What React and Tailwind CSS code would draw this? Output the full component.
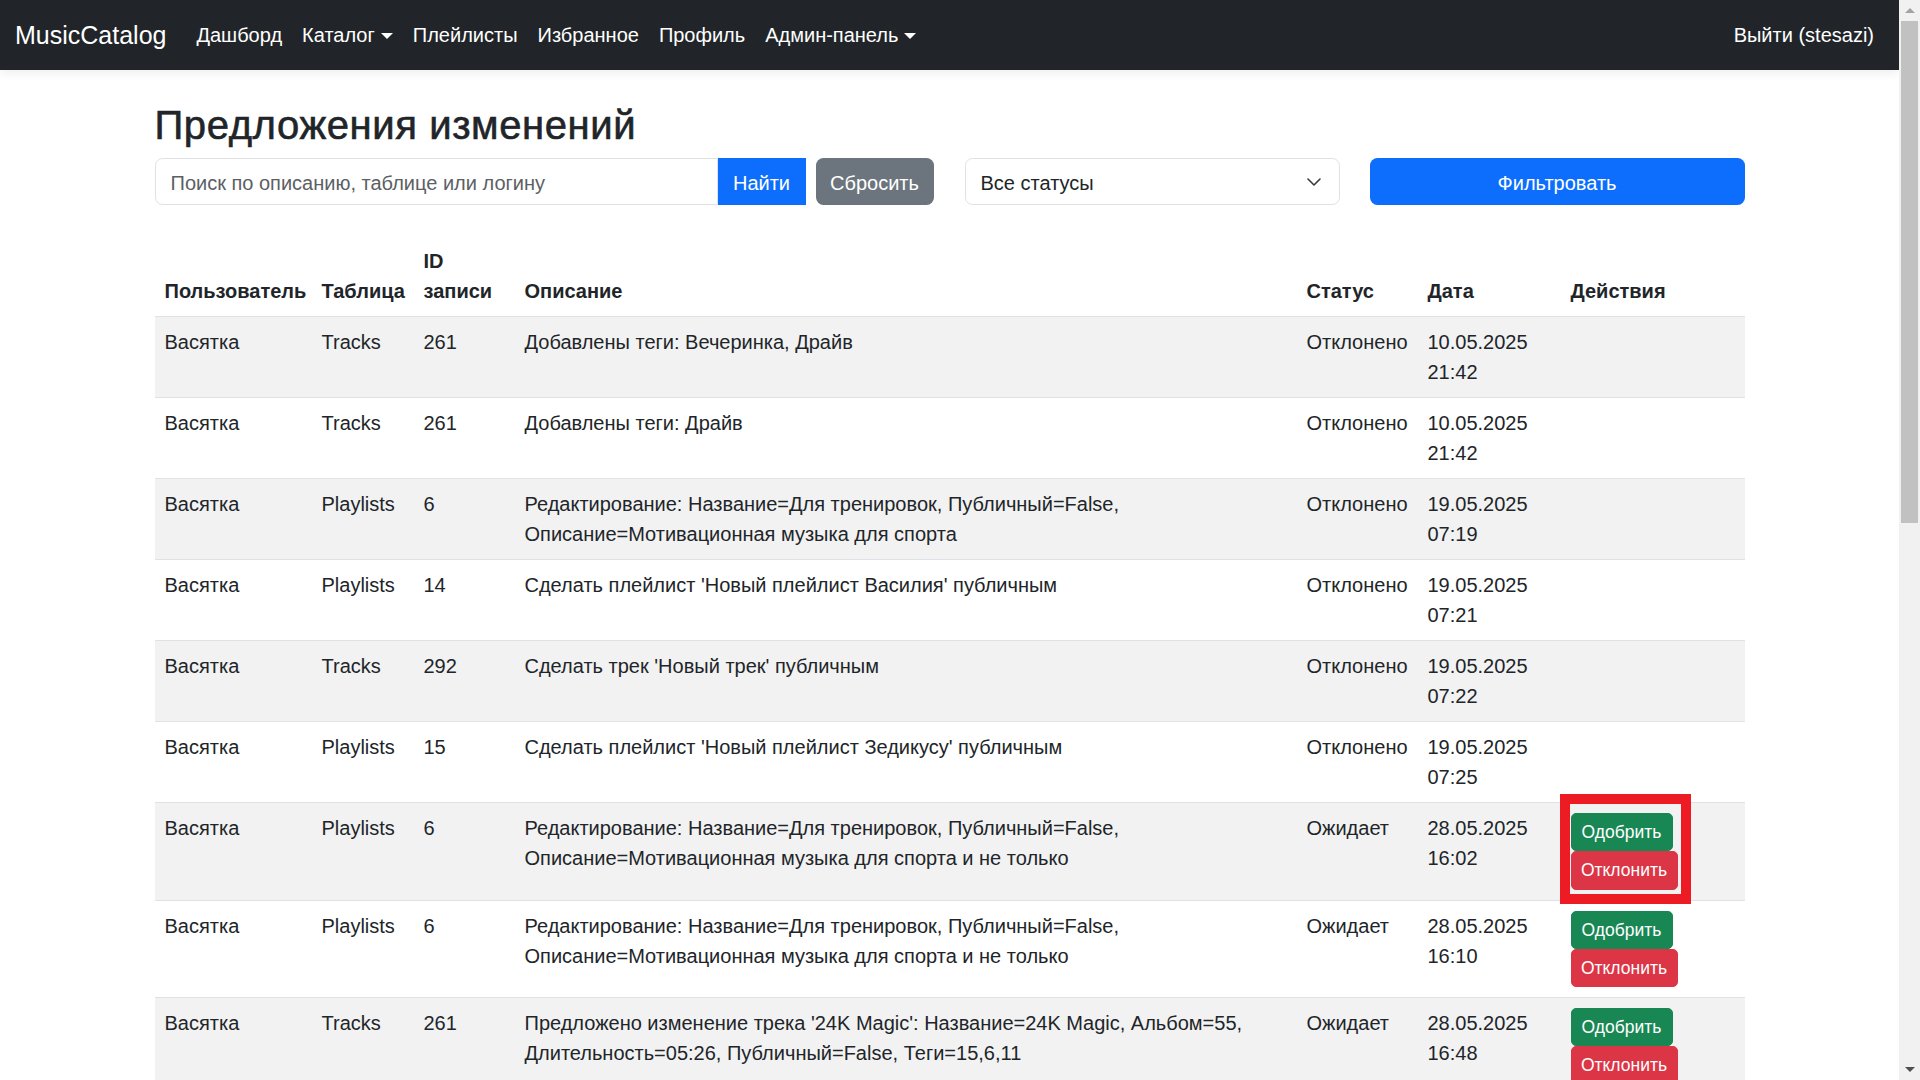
import React from "react";

const rows = [
  {
    user: "Васятка",
    table: "Tracks",
    id: "261",
    desc: ["Добавлены теги: Вечеринка, Драйв"],
    status: "Отклонено",
    date: "10.05.2025",
    time: "21:42",
  },
  {
    user: "Васятка",
    table: "Tracks",
    id: "261",
    desc: ["Добавлены теги: Драйв"],
    status: "Отклонено",
    date: "10.05.2025",
    time: "21:42",
  },
  {
    user: "Васятка",
    table: "Playlists",
    id: "6",
    desc: [
      "Редактирование: Название=Для тренировок, Публичный=False,",
      "Описание=Мотивационная музыка для спорта",
    ],
    status: "Отклонено",
    date: "19.05.2025",
    time: "07:19",
  },
  {
    user: "Васятка",
    table: "Playlists",
    id: "14",
    desc: ["Сделать плейлист 'Новый плейлист Василия' публичным"],
    status: "Отклонено",
    date: "19.05.2025",
    time: "07:21",
  },
  {
    user: "Васятка",
    table: "Tracks",
    id: "292",
    desc: ["Сделать трек 'Новый трек' публичным"],
    status: "Отклонено",
    date: "19.05.2025",
    time: "07:22",
  },
  {
    user: "Васятка",
    table: "Playlists",
    id: "15",
    desc: ["Сделать плейлист 'Новый плейлист Зедикусу' публичным"],
    status: "Отклонено",
    date: "19.05.2025",
    time: "07:25",
  },
  {
    user: "Васятка",
    table: "Playlists",
    id: "6",
    desc: [
      "Редактирование: Название=Для тренировок, Публичный=False,",
      "Описание=Мотивационная музыка для спорта и не только",
    ],
    status: "Ожидает",
    date: "28.05.2025",
    time: "16:02",
    pending: true,
    marked: true,
  },
  {
    user: "Васятка",
    table: "Playlists",
    id: "6",
    desc: [
      "Редактирование: Название=Для тренировок, Публичный=False,",
      "Описание=Мотивационная музыка для спорта и не только",
    ],
    status: "Ожидает",
    date: "28.05.2025",
    time: "16:10",
    pending: true,
  },
  {
    user: "Васятка",
    table: "Tracks",
    id: "261",
    desc: [
      "Предложено изменение трека '24K Magic': Название=24K Magic, Альбом=55,",
      "Длительность=05:26, Публичный=False, Теги=15,6,11",
    ],
    status: "Ожидает",
    date: "28.05.2025",
    time: "16:48",
    pending: true,
  },
];

function Caret() {
  return (
    <span className="ml-[6px] mt-[1px] inline-block h-0 w-0 border-x-[6px] border-t-[6px] border-x-transparent border-t-white" />
  );
}

function NavLink({ children, dropdown }) {
  return (
    <a className="flex items-center px-[10px] text-white">
      {children}
      {dropdown && <Caret />}
    </a>
  );
}

function Actions({ marked }) {
  return (
    <div className="relative flex flex-col items-start">
      <button className="w-[102px] rounded-[5px] border border-[#198754] bg-[#198754] py-[5px] text-center text-[17.5px] leading-[26.25px] text-white">
        Одобрить
      </button>
      <button className="w-[107px] rounded-[5px] border border-[#dc3545] bg-[#dc3545] py-[5px] text-center text-[17.5px] leading-[26.25px] text-white">
        Отклонить
      </button>
      {marked && (
        <div className="absolute left-[-11px] top-[-19px] h-[110px] w-[131px] border-[10px] border-[#ed1c24]" />
      )}
    </div>
  );
}

export default function App() {
  return (
    <div className="flex h-[1080px] w-[1920px] overflow-hidden bg-white font-['Liberation_Sans',Arial,sans-serif] text-[20px] leading-[30px] text-[#212529]">
      <div className="min-w-0 flex-1 overflow-hidden">
        {/* navbar */}
        <nav className="relative z-10 flex h-[70px] items-center bg-[#212529] px-[15px] shadow-[0_3px_10px_rgba(0,0,0,0.07)]">
          <a className="mr-[20px] text-[25px] leading-[37px] text-white">MusicCatalog</a>
          <NavLink>Дашборд</NavLink>
          <NavLink dropdown>Каталог</NavLink>
          <NavLink>Плейлисты</NavLink>
          <NavLink>Избранное</NavLink>
          <NavLink>Профиль</NavLink>
          <NavLink dropdown>Админ-панель</NavLink>
          <div className="ml-auto">
            <NavLink>Выйти (stesazi)</NavLink>
          </div>
        </nav>

        <main className="mx-auto w-[1590px]">
          <h2 className="mb-[10px] mt-[30px] pt-[3px] text-[40px] font-medium leading-[45px] tracking-[0.6px] [-webkit-text-stroke:0.6px_#212529]">
            Предложения изменений
          </h2>

          {/* filters */}
          <div className="flex gap-[30px]">
            <div className="flex w-[780px]">
              <input
                placeholder="Поиск по описанию, таблице или логину"
                className="h-[47px] w-[563px] rounded-l-[7.5px] border border-[#dee2e6] px-[15px] pt-[4px] text-[20px] outline-none placeholder:text-[#5c6064]"
              />
              <button className="h-[47px] w-[88px] bg-[#0d6efd] pt-[3px] text-white">Найти</button>
              <button className="ml-[10px] h-[47px] w-[118px] rounded-[7.5px] bg-[#6c757d] pt-[3px] text-white">
                Сбросить
              </button>
            </div>
            <div className="flex h-[47px] w-[375px] items-center justify-between rounded-[7.5px] border border-[#dee2e6] pl-[15px] pr-[17px] pt-[3px]">
              <span>Все статусы</span>
              <svg width="16" height="16" viewBox="0 0 16 16" fill="none" className="-mt-[3px]">
                <path d="m2 5 6 6 6-6" stroke="#343a40" strokeWidth="1.6" strokeLinecap="round" strokeLinejoin="round" />
              </svg>
            </div>
            <button className="h-[47px] w-[375px] rounded-[7.5px] bg-[#0d6efd] pt-[3px] text-white">Фильтровать</button>
          </div>

          {/* table */}
          <table className="mt-[31px] w-full table-fixed">
            <colgroup>
              <col className="w-[157px]" />
              <col className="w-[102px]" />
              <col className="w-[101px]" />
              <col className="w-[782px]" />
              <col className="w-[121px]" />
              <col className="w-[143px]" />
              <col className="w-[184px]" />
            </colgroup>
            <thead>
              <tr className="border-b border-[#dee2e6]">
                <th className="p-[10px] text-left align-bottom font-bold">Пользователь</th>
                <th className="p-[10px] text-left align-bottom font-bold">Таблица</th>
                <th className="p-[10px] text-left align-bottom font-bold">
                  ID
                  <br />
                  записи
                </th>
                <th className="p-[10px] text-left align-bottom font-bold">Описание</th>
                <th className="p-[10px] text-left align-bottom font-bold">Статус</th>
                <th className="p-[10px] text-left align-bottom font-bold">Дата</th>
                <th className="p-[10px] text-left align-bottom font-bold">Действия</th>
              </tr>
            </thead>
            <tbody>
              {rows.map((r, i) => (
                <tr key={i} className={`border-b border-[#dee2e6] ${i % 2 === 0 ? "bg-[#f2f2f2]" : "bg-white"}`}>
                  <td className="p-[10px] align-top">{r.user}</td>
                  <td className="p-[10px] align-top">{r.table}</td>
                  <td className="p-[10px] align-top">{r.id}</td>
                  <td className="p-[10px] align-top">
                    {r.desc.map((line, j) => (
                      <div key={j}>{line}</div>
                    ))}
                  </td>
                  <td className="p-[10px] align-top">{r.status}</td>
                  <td className="p-[10px] align-top">
                    {r.date}
                    <br />
                    {r.time}
                  </td>
                  <td className="p-[10px] align-top">{r.pending && <Actions marked={r.marked} />}</td>
                </tr>
              ))}
            </tbody>
          </table>
        </main>
      </div>

      {/* scrollbar */}
      <div className="flex w-[21px] flex-col bg-[#f1f1f1]">
        <div className="flex h-[21px] items-center justify-center">
          <span className="h-0 w-0 border-x-[5px] border-b-[5px] border-x-transparent border-b-[#a3a3a3]" />
        </div>
        <div className="mx-[2px] h-[502px] bg-[#c1c1c1]" />
        <div className="flex-1" />
        <div className="flex h-[21px] items-center justify-center">
          <span className="h-0 w-0 border-x-[5px] border-t-[5px] border-x-transparent border-t-[#505050]" />
        </div>
      </div>
    </div>
  );
}
